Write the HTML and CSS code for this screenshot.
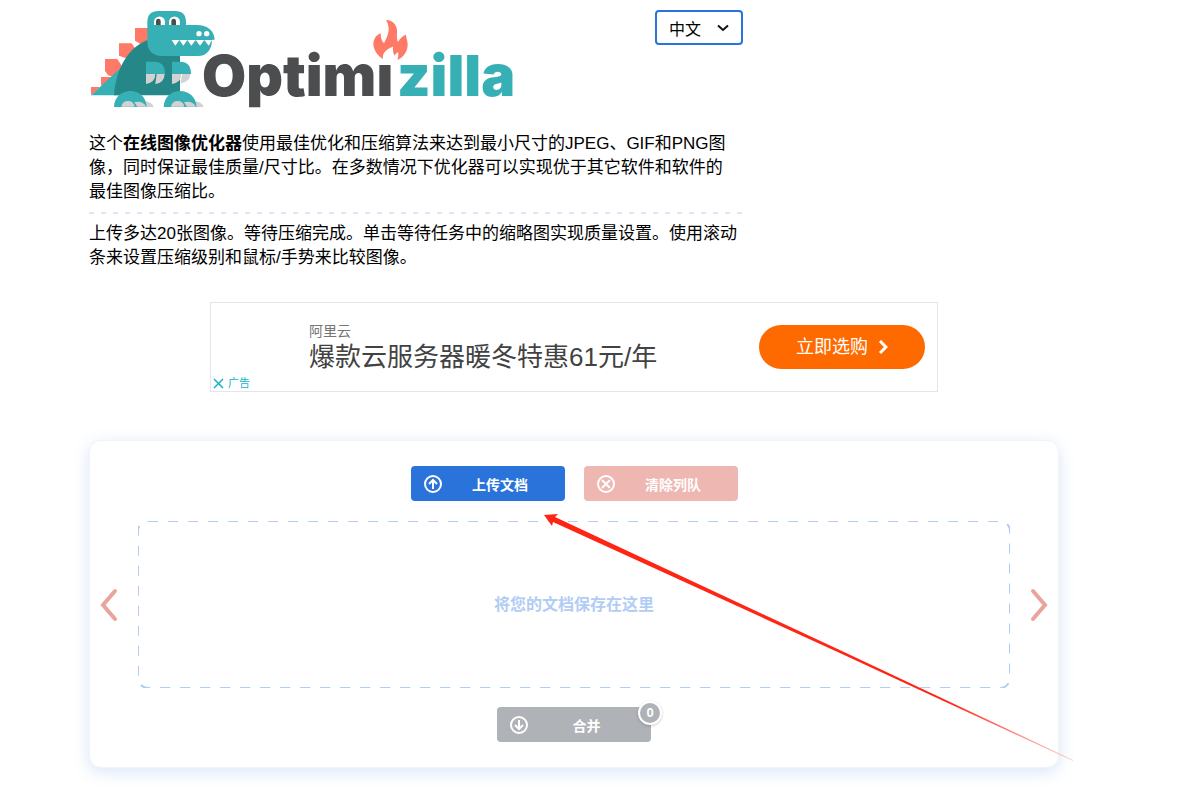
FILE: index.html
```html
<!DOCTYPE html>
<html lang="zh-CN">
  <head>
    <meta charset="UTF-8" />
    <meta name="viewport" content="width=device-width, initial-scale=1.0" />
    <title>Optimizilla</title>
    <link rel="stylesheet" href="styles.css">
  </head>
  <body>
    <div class="page">
      <header class="header">
        <div class="top-row">
          <a href="#" class="logo" aria-label="Optimizilla">
            <svg viewBox="27 24 1260 300">
              <!-- spikes -->
              <path fill="#ff7a66" d="M33 261H60L33 286ZM63 231H92V258L63 256ZM75 177H112L127 200 103 232 84 226 75 212ZM117 130H155L166 146 143 176 117 167ZM165 84H204V134L188 136 165 122Z"/>
              <!-- body and tail -->
              <path fill="#37b0b5" d="M33 286L128 198V286Z"/>
              <path fill="#258787" d="M102 286C108 200 150 136 210 118L300 160V286Z"/>
              <!-- head -->
              <path fill="#37b0b5" d="M202 66Q202 33 236 33H285Q318 33 318 66V75H350C382 75 403 92 404 119H396C396 148 380 168 354 168H248Q202 168 202 124Z"/>
              <path fill="#fff" d="M222 75V66a16 16 0 0 1 33 0V75ZM267 75V66a16 16 0 0 1 33 0V75ZM275 120H396L386 137 373 120 360 137 347 120 334 137 322 120 310 137 298 120 286 137Z"/>
              <path fill="#4b4d4e" d="M228 75V64a7 8 0 0 1 14 0V75ZM274 75V64a7 8 0 0 1 14 0V75Z"/>
              <circle fill="#fff" cx="357" cy="101" r="8"/>
              <circle fill="#fff" cx="380" cy="101" r="8"/>
              <!-- arms -->
              <path fill="#37b0b5" d="M198 185H222Q255 185 255 222H198ZM276 185H300Q333 185 333 222H276Z"/>
              <path fill="#d2d2d2" d="M198 222H226Q226 247 198 252ZM230 222H254Q253 249 226 252ZM276 222H304Q304 247 276 252ZM307 222H331Q330 247 301 250Z"/>
              <!-- feet -->
              <path fill="#d2d2d2" d="M180 304Q216 301 221 321H180ZM330 304Q366 301 371 321H330Z"/>
              <path fill="#37b0b5" d="M102 321C104 257 198 257 200 321ZM251 321C253 257 347 257 350 321Z"/>
              <path fill="#d2d2d2" d="M124 320Q127 303 144 303T164 320ZM163 307Q187 301 199 320H172ZM273 320Q276 303 293 303T313 320ZM312 307Q336 301 348 320H321Z"/>
              <text class="word dark" x="366" y="288">Optimı</text>
              <text class="word teal" x="951" y="288">zilla</text>
              <!-- flame -->
              <path fill="#ff7a66" d="M918 59C940 61 953 76 951 99C950 111 951 120 954 126C960 115 968 107 978 104C978 115 984 122 983 136C982 157 969 173 952 180C956 171 954 163 955 157C950 158 946 162 944 167C940 160 938 153 939 140C923 145 905 158 909 177C893 168 880 149 880 132C881 117 888 105 902 100C902 112 905 124 912 130C923 107 934 88 918 59Z"/>
            </svg>
          </a>
          <button type="button" class="lang-btn">
            <span>中文</span>
            <svg width="12" height="8" viewBox="0 0 12 8"><path d="M1 1.500L6 6L11 1.500" fill="none" stroke="#111" stroke-width="2"/></svg>
          </button>
        </div>
        <p class="intro">这个<b>在线图像优化器</b>使用最佳优化和压缩算法来达到最小尺寸的JPEG、GIF和PNG图像，同时保证最佳质量/尺寸比。在多数情况下优化器可以实现优于其它软件和软件的最佳图像压缩比。</p>
        <div class="divider"></div>
        <p>上传多达20张图像。等待压缩完成。单击等待任务中的缩略图实现质量设置。使用滚动条来设置压缩级别和鼠标/手势来比较图像。</p>
      </header>

      <section class="ad">
        <div class="ad-text">
          <span class="ad-brand">阿里云</span>
          <span class="ad-title">爆款云服务器暖冬特惠61元/年</span>
        </div>
        <a href="#" class="ad-btn">
          立即选购
          <svg width="10" height="14" viewBox="0 0 10 14"><path d="M2 1L8 7L2 13" fill="none" stroke="#fff" stroke-width="3"/></svg>
        </a>
        <div class="ad-label">
          <svg width="11" height="11" viewBox="0 0 11 11"><path d="M1 1L10 10M10 1L1 10" stroke="#12b5cb" stroke-width="1.500"/></svg>
          <span>广告</span>
        </div>
      </section>

      <main class="uploader">
        <div class="actions">
          <button type="button" class="btn upload">
            <svg class="icon" viewBox="0 0 18 18"><circle cx="9" cy="9" r="8"/><path d="M9 14V5M5 9L9 5L13 9"/></svg>
            <span>上传文档</span>
          </button>
          <button type="button" class="btn clear">
            <svg class="icon" viewBox="0 0 18 18"><circle cx="9" cy="9" r="8"/><path d="M5 5L13 13M13 5L5 13"/></svg>
            <span>清除列队</span>
          </button>
        </div>
        <div class="queue">
          <button type="button" class="nav" aria-label="prev">
            <svg width="18" height="34" viewBox="0 0 18 34"><path d="M15 3L3 17L15 31"/></svg>
          </button>
          <div class="drop-zone">
            <svg class="dashes"><rect width="100%" height="100%" rx="10"/></svg>
            <span>将您的文档保存在这里</span>
          </div>
          <button type="button" class="nav" aria-label="next">
            <svg width="18" height="34" viewBox="0 0 18 34"><path d="M3 3L15 17L3 31"/></svg>
          </button>
        </div>
        <div class="actions">
          <button type="button" class="btn merge">
            <svg class="icon" viewBox="0 0 18 18"><circle cx="9" cy="9" r="8"/><path d="M9 4V13M5 9L9 13L13 9"/></svg>
            <span>合并</span>
            <span class="count">0</span>
          </button>
        </div>
        <!-- pointer to the upload button -->
        <svg class="pointer" width="530" height="248" viewBox="0 0 530 248">
          <defs>
            <linearGradient id="fade" gradientUnits="userSpaceOnUse" x1="400" y1="0" x2="530" y2="0">
              <stop offset="0" stop-color="#ff2414"/>
              <stop offset="1" stop-color="#ff2414" stop-opacity="0.2"/>
            </linearGradient>
          </defs>
          <path fill="url(#fade)" d="M0 1L14 0L11 3L300 138L529 246L529 247L298 140L9 8L8 12Z"/>
        </svg>
      </main>
    </div>
  </body>
</html>
```
FILE: styles.css
```css
:root {
  --blue: #2a73da;
  --teal: #37b0b5;
  --orange: #ff6a00;
}

* {
  margin: 0;
  padding: 0;
  box-sizing: border-box;
}

body {
  font-family: "Liberation Sans", "Noto Sans CJK SC", sans-serif;
  font-size: 17px;
  line-height: 24px;
  color: #000;
  background-color: #fff;
}

button {
  font-family: inherit;
  border: none;
  cursor: pointer;
}

a {
  text-decoration: none;
}

.page {
  padding: 8px 124px 32px 89px;
}

.header {
  max-width: 654px;
}

.top-row {
  display: flex;
  justify-content: space-between;
  align-items: flex-start;
  margin-bottom: 24px;
}

.logo svg {
  display: block;
  width: 420px;
  height: 100px;
  overflow: visible;
}

.word {
  font-family: "Inter", sans-serif;
  font-size: 171px;
  font-weight: 900;
}

.dark {
  fill: #4b4d4e;
}

.teal {
  fill: var(--teal);
}

.lang-btn {
  display: flex;
  align-items: center;
  justify-content: space-between;
  width: 88px;
  height: 35px;
  margin-top: 2px;
  padding: 0 12px;
  border: 2px solid var(--blue);
  border-radius: 4px;
  background-color: #fff;
  color: #000;
  font-size: 16px;
}

.intro {
  padding-right: 8px;
}

.divider {
  height: 2px;
  margin: 8px 0;
  background: repeating-linear-gradient(90deg, #dbe7f7 0 5px, transparent 5px 12px);
}

/* Ad banner */
.ad {
  position: relative;
  display: flex;
  align-items: center;
  justify-content: space-between;
  width: 728px;
  max-width: 100%;
  height: 90px;
  margin: 32px auto 48px;
  padding: 0 12px 0 98px;
  border: 1px solid #e5e5e5;
}

.ad-text {
  display: flex;
  flex-direction: column;
}

.ad-brand {
  font-size: 14px;
  line-height: 20px;
  color: #757575;
}

.ad-title {
  font-size: 26px;
  line-height: 32px;
  color: #424242;
}

.ad-btn {
  display: flex;
  align-items: center;
  justify-content: center;
  gap: 10px;
  width: 166px;
  height: 44px;
  border-radius: 22px;
  background-color: var(--orange);
  color: #fff;
  font-size: 18px;
}

.ad-label {
  position: absolute;
  left: 2px;
  bottom: 0;
  display: flex;
  align-items: center;
  gap: 4px;
  font-size: 11px;
  line-height: 16px;
  color: #12b5cb;
}

/* Uploader card */
.uploader {
  position: relative;
  padding: 25px 10px;
  border: 1px solid #f0f3f8;
  border-radius: 12px;
  background-color: #fff;
  box-shadow: 0 4px 16px rgba(42, 115, 218, 0.18);
}

.actions {
  display: flex;
  justify-content: center;
  gap: 19px;
}

.btn {
  position: relative;
  display: flex;
  align-items: center;
  width: 154px;
  height: 35px;
  padding: 0 6px 0 13px;
  border-radius: 4px;
  color: #fff;
  font-size: 14px;
  font-weight: bold;
}

.btn span {
  flex: 1;
}

.upload {
  background-color: var(--blue);
}

.clear {
  background-color: #efb7b1;
}

.merge {
  background-color: #afb2b7;
}

.icon {
  width: 18px;
  height: 18px;
  fill: none;
  stroke: #fff;
  stroke-width: 2;
}

.btn .count {
  position: absolute;
  top: -6px;
  right: -11px;
  width: 24px;
  height: 24px;
  border: 2px solid #fff;
  border-radius: 50%;
  background-color: #afb2b7;
  box-shadow: 0 1px 3px rgba(0, 0, 0, 0.2);
  font-size: 13px;
  line-height: 20px;
}

.queue {
  display: flex;
  align-items: center;
  justify-content: space-between;
  margin: 20px 0 19px;
}

.nav {
  width: 18px;
  background: none;
}

.nav svg {
  display: block;
  fill: none;
  stroke: #e9a49c;
  stroke-width: 4;
  stroke-linecap: round;
}

.drop-zone {
  position: relative;
  display: flex;
  align-items: center;
  justify-content: center;
  flex: 1;
  height: 167px;
  margin: 0 20px;
  color: #b1cdf3;
  font-size: 16px;
  font-weight: bold;
}

/* outer half of the stroke is clipped by the svg box */
.dashes {
  position: absolute;
  top: 0;
  left: 0;
  width: 100%;
  height: 100%;
}

.dashes rect {
  fill: none;
  stroke: #b1cdf3;
  stroke-width: 2;
  stroke-dasharray: 10 10;
}

.pointer {
  position: absolute;
  top: 73px;
  left: 454px;
  pointer-events: none;
}
```
